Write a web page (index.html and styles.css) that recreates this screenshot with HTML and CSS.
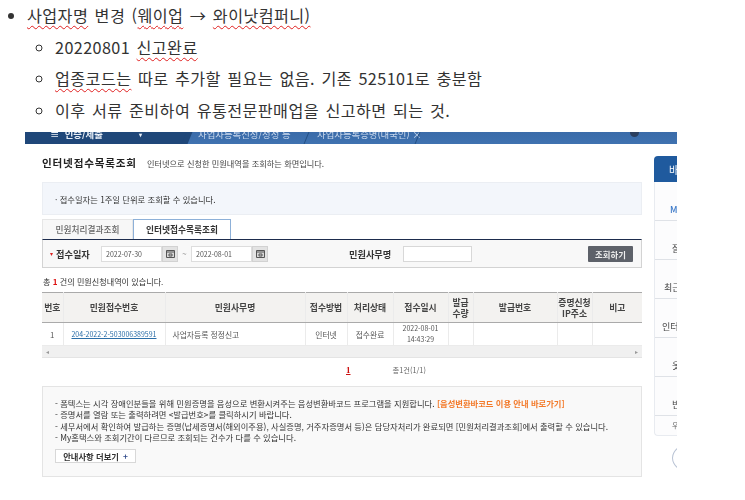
FILE: index.html
```html
<!DOCTYPE html>
<html lang="ko">
<head>
<meta charset="utf-8">
<title>사업자명 변경</title>
<link rel="stylesheet" href="styles.css">
</head>
<body>
<ul class="notes">
  <li><span class="sp">사업자명</span> 변경 (<span class="sp">웨이업</span> → <span class="sp">와이낫컴퍼니)</span>
    <ul>
      <li>20220801 <span class="sp">신고완료</span></li>
      <li><span class="sp">업종코드는</span> 따로 추가할 필요는 없음. 기존 525101로 충분함</li>
      <li>이후 서류 준비하여 유통전문판매업을 신고하면 되는 것.</li>
    </ul>
  </li>
</ul>
<div class="shot">
  <div class="nav">
    <div class="nav-home"><span class="nav-label">≡ &nbsp;인증/제출</span><span class="nav-caret">▾</span></div>
    <div class="nav-tab nav-tab-a"><span class="nav-label">사업자등록신청/정정 등</span></div>
    <div class="nav-tab nav-tab-b"><span class="nav-label">사업자등록증명(내국인) ×</span></div>
    <span class="nav-dot"></span>
  </div>
  <div class="page">
    <main class="main">
      <div class="title-row">
        <h1 class="title">인터넷접수목록조회</h1>
        <span class="desc">인터넷으로 신청한 민원내역을 조회하는 화면입니다.</span>
      </div>
      <div class="info">· 접수일자는 1주일 단위로 조회할 수 있습니다.</div>
      <div class="tabs">
        <div class="tab">민원처리결과조회</div>
        <div class="tab tab-on">인터넷접수목록조회</div>
      </div>
      <div class="search">
        <span class="req">▾</span><span class="lab lab-date">접수일자</span>
        <span class="date">2022-07-30</span>
        <span class="cal"><svg width="9" height="9" viewBox="0 0 9 9"><path d="M.5 1.5h8v7h-8z" fill="#d8d8d8" stroke="#555"/><path d="M.5 3h8M3 5h3v2H3z" fill="none" stroke="#555"/></svg></span>
        <span class="tilde">~</span>
        <span class="date">2022-08-01</span>
        <span class="cal"><svg width="9" height="9" viewBox="0 0 9 9"><path d="M.5 1.5h8v7h-8z" fill="#d8d8d8" stroke="#555"/><path d="M.5 3h8M3 5h3v2H3z" fill="none" stroke="#555"/></svg></span>
        <span class="lab lab-name">민원사무명</span>
        <span class="field"></span>
        <span class="go">조회하기</span>
      </div>
      <p class="count">총 <b>1</b> 건의 민원신청내역이 있습니다.</p>
      <table class="grid">
        <colgroup>
          <col class="c1"><col class="c2"><col class="c3"><col class="c4"><col class="c5">
          <col class="c6"><col class="c7"><col class="c8"><col class="c9"><col class="c10">
        </colgroup>
        <thead>
          <tr><th>번호</th><th>민원접수번호</th><th>민원사무명</th><th>접수방법</th><th>처리상태</th><th>접수일시</th><th>발급<br>수량</th><th>발급번호</th><th>증명신청<br>IP주소</th><th>비고</th></tr>
        </thead>
        <tbody>
          <tr><td>1</td><td><a class="no">204-2022-2-503006389591</a></td><td class="left">사업자등록 정정신고</td><td>인터넷</td><td>접수완료</td><td class="when">2022-08-01<br>14:43:29</td><td></td><td></td><td></td><td></td></tr>
        </tbody>
      </table>
      <div class="hscroll"><span>◂</span><span>▸</span></div>
      <div class="pager"><a class="cur">1</a><span class="tot">총1건(1/1)</span></div>
      <div class="notice">
        <p>- 폼텍스는 시각 장애인분들을 위해 민원증명을 음성으로 변환시켜주는 음성변환바코드 프로그램을 지원합니다. <em>[음성변환바코드 이용 안내 바로가기]</em></p>
        <p>- 증명서를 열람 또는 출력하려면 &lt;발급번호&gt;를 클릭하시기 바랍니다.</p>
        <p>- 세무서에서 확인하여 발급하는 증명(납세증명서(해외이주용), 사실증명, 거주자증명서 등)은 담당자처리가 완료되면 [민원처리결과조회]에서 출력할 수 있습니다.</p>
        <p>- My홈택스와 조회기간이 다르므로 조회되는 건수가 다를 수 있습니다.</p>
        <span class="more">안내사항 더보기 <i>+</i></span>
      </div>
    </main>
    <aside class="side">
      <div class="side-head">바로가기</div>
      <div class="side-list">
        <div class="side-row side-m">My민원</div>
        <div class="side-row side-in">잘</div>
        <div class="side-row side-wide">최근</div>
        <div class="side-row side-wider">인터넷</div>
        <div class="side-row side-in">옷</div>
        <div class="side-row side-in">빈</div>
        <div class="side-foot">우</div>
      </div>
      <div class="side-circle"></div>
    </aside>
  </div>
</div>
</body>
</html>
```
FILE: styles.css
```css
* { box-sizing: border-box; }
html, body { margin: 0; padding: 0; background: #fff; }
body { width: 745px; height: 500px; overflow: hidden; font-family: "Noto Sans CJK KR", "Noto Sans", sans-serif; color: #333; }

.notes { margin: 0; padding: 0 0 0 27px; font-size: 16.2px; letter-spacing: .4px; word-spacing: 1.5px; line-height: 31.7px; height: 132px; color: #333; }
.notes ul { margin: 0; padding: 0 0 0 28px; list-style: circle; }
.sp { text-decoration: underline wavy #e02020 1px; text-underline-offset: 3px; text-decoration-skip-ink: none; }

.shot { margin-left: 25px; width: 652px; height: 368px; overflow: hidden; filter: blur(.3px); }

.nav { position: relative; display: flex; height: 12px; overflow: hidden; background: linear-gradient(#3a6ba9, #3f72b0); color: #c9d8ec; font-size: 9.4px; }
.nav-home, .nav-tab { position: relative; display: flex; align-items: flex-end; }
.nav-label { display: block; line-height: 14px; margin-bottom: 3px; white-space: nowrap; }
.nav-home { width: 162px; padding-left: 25px; background: #1f4779; color: #e8eef6; font-weight: 700; }
.nav-home::after { content: ""; position: absolute; top: 0; right: -3px; width: 6px; height: 12px; background: #1f4779; transform: skewX(-22deg); }
.nav-caret { margin-left: 36px; margin-bottom: 5px; font-size: 6px; line-height: 8px; }
.nav-tab::after { content: ""; position: absolute; top: 0; right: 0; width: 1px; height: 12px; background: #234f85; transform: skewX(-22deg); }
.nav-tab-a { width: 120px; padding-left: 11px; }
.nav-tab-b { width: 111px; padding-left: 10px; }
.nav-dot { position: absolute; left: 605px; top: -4px; width: 9px; height: 9px; border-radius: 50%; background: #2b3f5f; }

.page { display: flex; align-items: flex-start; }
.main { width: 600px; margin-left: 17px; }

.title-row { display: flex; align-items: baseline; gap: 10px; height: 38px; padding-top: 11px; }
.title { margin: 0; font-size: 10.6px; letter-spacing: .8px; font-weight: 700; color: #222; line-height: 16px; white-space: nowrap; }
.desc { font-size: 8.2px; color: #444; white-space: nowrap; }

.info { height: 33px; padding: 0 12px; display: flex; align-items: center; background: #f3f6fb; border: 1px solid #ebeef3; font-size: 8.3px; color: #333; }

.tabs { display: flex; height: 20px; margin-top: 4px; }
.tab { width: 91px; display: flex; align-items: center; justify-content: center; background: #f7f7f7; border: 1px solid #e6e6e6; border-bottom: 0; font-size: 8.7px; font-weight: 500; color: #666; }
.tab-on { width: 98px; background: #fff; border-color: #8db0d8; font-weight: 700; color: #333; }

.search { display: flex; align-items: center; height: 29px; padding: 0 8px 0 7px; background: #f8f8f8; border: 1px solid #d3d3d3; border-top: 1px solid #1d2c4d; font-size: 8px; }
.req { color: #d22; font-size: 6px; }
.lab { font-weight: 700; color: #333; font-size: 9.2px; white-space: nowrap; }
.lab-date { margin-left: 3px; width: 45px; }
.date { width: 61px; height: 16px; display: flex; align-items: center; padding-left: 4px; background: #fff; border: 1px solid #ddd; font-size: 7px; color: #555; }
.cal { width: 16px; height: 16px; display: flex; align-items: center; justify-content: center; background: #e3e3e3; border: 1px solid #d2d2d2; }
.tilde { width: 13px; text-align: center; color: #666; }
.lab-name { margin-left: 81px; width: 54px; }
.field { width: 69px; height: 16px; background: #fff; border: 1px solid #d8d8d8; }
.go { margin-left: auto; width: 45px; height: 16px; display: flex; align-items: center; justify-content: center; background: #5d6169; color: #eee; font-weight: 700; font-size: 8.4px; border-radius: 1px; }

.count { margin: 0; height: 24px; padding: 8px 0 0 1px; font-size: 8.1px; line-height: 12px; color: #333; }
.count b { color: #d11; }

.grid { width: 600px; table-layout: fixed; border-collapse: collapse; font-size: 7.8px; }
.c1 { width: 21px; } .c2 { width: 102px; } .c3 { width: 140px; } .c4 { width: 42px; } .c5 { width: 46px; }
.c6 { width: 55px; } .c7 { width: 25px; } .c8 { width: 84px; } .c9 { width: 35px; } .c10 { width: 50px; }
.grid th { height: 30px; padding: 0; background: #f3f2f0; border: 1px solid #ebebeb; border-top: 1px solid #aaa; border-bottom: 1px solid #aaa; font-size: 8.8px; font-weight: 700; color: #444; line-height: 11px; white-space: nowrap; }
.grid td { height: 22px; padding: 0; text-align: center; border: 1px solid #ebebeb; border-top: 0; color: #555; line-height: 11px; white-space: nowrap; }
.grid th:first-child, .grid td:first-child { border-left: 0; }
.grid th:last-child, .grid td:last-child { border-right: 0; }
.grid td.left { text-align: left; padding-left: 7px; }
.grid td.when { font-size: 7px; }
.no { color: #2b6ea8; text-decoration: underline; font-size: 7px; }

.hscroll { height: 12px; display: flex; justify-content: space-between; align-items: center; padding: 0 4px; background: #f0f0f0; border-bottom: 1px solid #e4e4e4; font-size: 6px; color: #999; }

.pager { display: flex; height: 28px; padding-top: 6px; font-size: 7.3px; line-height: 12px; color: #666; }
.cur { margin-left: 304px; color: #c11; font-family: "Liberation Serif", serif; font-size: 9px; font-weight: 700; text-decoration: underline; }
.tot { margin-left: 42px; }

.notice { height: 91px; padding: 11px 12px 0; background: #f9f9f9; border: 1px solid #e4e4e4; font-size: 8.3px; line-height: 11.3px; color: #333; white-space: nowrap; }
.notice p { margin: 0; }
.notice em { font-style: normal; font-weight: 700; color: #f37a2a; }
.more { display: inline-flex; align-items: center; justify-content: center; gap: 4px; width: 81px; height: 14px; margin-top: 6px; background: #fff; border: 1px solid #d8d8d8; font-weight: 700; font-size: 8.3px; }
.more i { font-style: normal; color: #334d8c; }

.side { flex: none; width: 80px; margin-left: 12px; margin-top: 12px; font-size: 9px; }
.side-head { height: 26px; padding-left: 15px; display: flex; align-items: center; background: #1f5a9e; color: #fff; border-radius: 4px 0 0 0; font-size: 10px; }
.side-list { background: #fcfcfd; border-left: 1px solid #e8ebf0; border-bottom: 1px solid #e8ebf0; border-radius: 0 0 0 4px; }
.side-row { height: 39px; display: flex; align-items: flex-end; padding-bottom: 4px; border-bottom: 1px solid #dfe2e7; color: #444; white-space: nowrap; }
.side-in { padding-left: 17px; }
.side-m { padding-left: 15px; color: #3a78c8; font-weight: 500; }
.side-wide { padding-left: 9px; }
.side-wider { padding-left: 7px; }
.side-foot { height: 19px; padding-left: 17px; font-size: 7px; line-height: 18px; color: #666; }
.side-circle { width: 40px; height: 30px; margin: 7px 0 0 18px; border: 1px solid #b9c3d4; border-radius: 50%; background: #fff; }
```
